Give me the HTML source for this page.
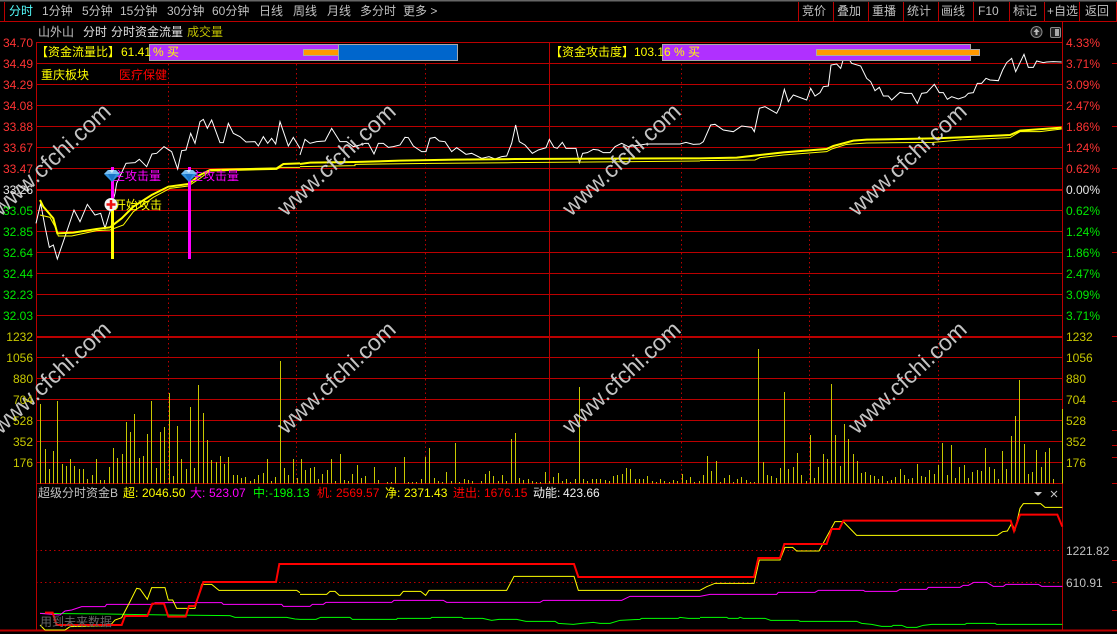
<!DOCTYPE html>
<html><head><meta charset="utf-8"><style>
html,body{margin:0;padding:0;background:#000;width:1117px;height:634px;overflow:hidden}
svg{position:absolute;left:0;top:0;display:block}
text{font-family:"Liberation Sans","WenQuanYi Zen Hei","Noto Sans CJK SC",sans-serif;font-size:12px}
.v{vector-effect:non-scaling-stroke;fill:none}
.g{stroke:#bb0000;stroke-width:1;fill:none;shape-rendering:crispEdges}
.t{stroke:#bb0000;stroke-width:2;fill:none;shape-rendering:crispEdges}
.d{stroke:#bb0000;stroke-width:1;stroke-dasharray:1.5 3;fill:none;shape-rendering:crispEdges}
text.wm{font-size:23px;fill:#d4d4d4;opacity:.92}
.r{fill:#ff3333}.n{fill:#00e800}.y{fill:#c8c800}.a{text-anchor:end}
</style></head><body>
<svg width="1117" height="634" viewBox="0 0 1117 634" xmlns="http://www.w3.org/2000/svg">
<rect width="1117" height="634" fill="#000"/>
<rect width="1117" height="1.5" fill="#666"/>
<!-- frame -->
<path class="g" d="M0 21.5H1117M4.5 2V21M798.5 2V21M833.5 2V21M868.5 2V21M903.5 2V21M938.5 2V21M973.5 2V21M1009.5 2V21M1044.5 2V21M1079.5 2V21M1116.5 2V21"/>
<path class="g" d="M36.5 42V630M1062.5 22V630"/>
<path class="g" d="M36 42.5H1062M36 63.5H1062M36 84.5H1062M36 105.5H1062M36 126.5H1062M36 147.5H1062M36 168.5H1062M36 210.5H1062M36 231.5H1062M36 252.5H1062M36 273.5H1062M36 294.5H1062M36 315.5H1062M36 357.5H1062M36 378.5H1062M36 399.5H1062M36 420.5H1062M36 441.5H1062M36 462.5H1062M36 483.5H1062"/>
<path class="t" d="M36 190H1062M36 337H1062M0 630.5H1117"/>
<path class="d" d="M168.5 64V483M296.5 64V483M425.5 64V483M681.5 64V483M809.5 64V483M938.5 64V483"/>
<path class="g" d="M549.5 42V483"/>
<path class="d" d="M36 550.5H1062M36 582.5H1062"/>
<path class="g" d="M1112 63.5H1117M1112 126.5H1117M1112 168.5H1117M1112 252.5H1117M1112 336.5H1117M1112 401.5H1117M1112 430.5H1117M1112 445.5H1117M1112 457.5H1117M1112 483.5H1117M1112 560.5H1117M1112 582.5H1117M1112 610.5H1117"/>

<!-- volume bars -->
<g transform="translate(0,320) scale(.33333)" stroke="#c8c800" stroke-width="1" shape-rendering="crispEdges">
<path class="v" d="M121 252V490M136 387V490M148 447V490M160 393V490M172 243V490M187 432V490M199 438V490M211 417V490M223 438V490M238 447V490M250 447V490M262 477V490M277 465V490M289 417V490M301 480V490M313 480V490M328 441V490M340 384V490M352 414V490M367 402V490M379 306V490M391 336V490M403 282V490M418 414V490M430 408V490M442 342V490M454 243V490M469 444V490M481 336V490M493 321V490M508 219V490M520 468V490M532 318V490M544 417V490M559 447V490M571 261V490M583 444V490M595 195V490M610 279V490M622 360V490M634 420V490M649 426V490M661 408V490M673 432V490M685 411V490M700 465V490M712 465V490M724 474V490M736 471V490M751 483V490M763 477V490M775 465V490M790 459V490M802 417V490M814 483V490M826 471V490M841 123V490M853 444V490M865 465V490M880 417V490M892 474V490M904 417V490M916 450V490M931 444V490M943 441V490M955 477V490M967 462V490M982 450V490M994 417V490M1006 483V490M1021 402V490M1033 480V490M1045 483V490M1057 462V490M1072 435V490M1084 474V490M1096 468V490M1123 441V490M1135 480V490M1162 486V490M1174 486V490M1186 441V490"/>
</g>
<g transform="translate(400,320) scale(.33333)" stroke="#c8c800" stroke-width="1" shape-rendering="crispEdges">
<path class="v" d="M13 411V490M25 486V490M37 486V490M49 486V490M64 477V490M76 411V490M88 384V490M103 474V490M115 483V490M127 486V490M139 456V490M154 483V490M166 369V490M178 486V490M193 477V490M205 480V490M217 483V490M244 483V490M256 462V490M268 453V490M280 468V490M295 483V490M307 465V490M319 483V490M334 357V490M346 339V490M358 474V490M370 480V490M385 477V490M397 483V490M409 486V490M421 486V490M436 456V490M448 483V490M460 471V490M475 459V490M487 483V490M499 477V490M511 486V490M526 477V490M538 201V490M550 477V490M562 483V490M577 477V490M589 477V490M601 477V490M616 480V490M628 483V490M640 468V490M652 465V490M667 462V490M679 444V490M691 447V490M706 477V490M718 477V490M730 477V490M742 468V490M757 483V490M769 486V490M781 477V490M793 483V490M808 486V490M820 480V490M832 483V490M847 462V490M859 480V490M871 471V490M883 486V490M898 483V490M910 465V490M922 408V490M934 453V490M949 423V490M961 486V490M973 474V490M988 465V490M1000 486V490M1012 477V490M1024 471V490M1039 480V490M1051 486V490M1063 486V490"/>
</g>
<g transform="translate(757,320) scale(.33333)" stroke="#c8c800" stroke-width="1" shape-rendering="crispEdges">
<path class="v" d="M4 87V490M19 426V490M31 465V490M43 468V490M58 474V490M70 444V490M82 216V490M94 447V490M109 441V490M121 399V490M133 465V490M148 483V490M160 345V490M172 474V490M184 441V490M199 402V490M211 417V490M223 192V490M235 345V490M250 438V490M262 312V490M274 357V490M289 402V490M301 423V490M313 459V490M325 456V490M340 465V490M352 468V490M364 477V490M376 468V490M391 483V490M403 480V490M415 471V490M430 447V490M442 465V490M454 477V490M466 474V490M481 432V490M493 468V490M505 471V490M517 450V490M532 462V490M544 435V490M556 369V490M571 465V490M583 375V490M595 474V490M607 441V490M622 435V490M634 474V490M646 456V490M661 450V490M673 453V490M685 384V490M697 441V490M712 447V490M724 477V490M736 393V490M748 447V490M763 348V490M775 288V490M787 180V490M802 372V490M814 462V490M826 456V490M838 390V490M853 441V490M865 396V490M877 384V490M889 477V490M916 267V490"/>
</g>

<!-- white price line -->
<g fill="none" stroke="#fff" stroke-width="1">
<polyline class="v" transform="translate(0,110) scale(.33333)" points="108,340 122,280 135,350 148,412 160,405 172,447 195,380 222,300 240,335 262,283 285,315 302,310 315,355 330,305 345,250 350,220 378,160 405,158 418,148 440,170 456,132 470,130 492,110 515,125 533,177 545,122 558,120 572,70 585,100 600,35 610,28 622,55 635,30 660,98 670,98 685,40 700,70 720,80 738,96 765,95 775,108 790,80 803,100 815,85 827,102 840,35 865,108 880,82 900,115"/>
<polyline class="v" transform="translate(300,100) scale(.33333)" points="0,165 15,118 30,130 50,125 75,123 95,85 120,125 140,125 160,140 180,135 195,130 205,130 222,162 235,130 250,130 265,142 280,140 300,135 315,112 325,113 340,138 365,155 378,155 390,115 405,112 418,123 435,125 455,155 470,143 498,163 515,160 545,175 567,170 585,177 605,170 620,168 635,130 647,75 658,125 675,135 697,160 715,150 738,143 748,118 762,142 772,145 787,127 798,145 828,145 838,188 848,160 862,158 880,148 895,150 910,158 930,158 945,140 965,130 985,140 1040,132 1140,132 1158,127 1180,133 1200,132"/>
<polyline class="v" transform="translate(700,50) scale(.33333)" points="0,282 10,275 32,225 45,223 70,240 100,245 125,228 155,232 163,245 178,175 195,170 230,190 240,170 253,118 265,155 280,135 320,150 332,115 345,138 360,128 370,110 385,108 393,45 410,42 422,55 435,10 455,40 482,48 500,85 512,95 525,122 538,112 550,138 565,138 575,150 600,127 615,130 635,130 652,160 665,130 680,128 703,103 718,128 730,128 742,148 755,140 775,147 795,140 805,130 820,128 832,100 845,100 858,85 870,90 895,92 908,60 920,38 935,25 947,65 972,13 985,52 1000,52 1010,33 1030,38 1040,36 1060,35 1085,36"/>
</g>
<!-- yellow avg lines -->
<g fill="none" stroke="#ffff00">
<polyline class="v" stroke-width="2" transform="translate(0,110) scale(.33333)" points="120,270 130,290 160,325 172,370 220,368 290,357 330,352 365,325 400,290 455,255 505,230 565,222 600,195 630,180 830,175 850,162 900,160"/>
<polyline class="v" stroke-width="1" transform="translate(0,110) scale(.33333)" points="120,315 150,322 165,350 175,378 215,378 290,362 330,360 370,345 400,305 460,262 510,235 565,228 600,205 630,183 830,178 840,172 900,172"/>
<polyline class="v" stroke-width="2" transform="translate(300,100) scale(.33333)" points="0,192 30,188 165,186 300,182 465,179 645,177 1120,175 1200,175"/>
<polyline class="v" stroke-width="1" transform="translate(300,100) scale(.33333)" points="0,200 165,197 165,193 395,190 640,188 1200,183"/>
<polyline class="v" stroke-width="2" transform="translate(700,50) scale(.33333)" points="0,325 110,323 180,315 250,307 380,297 400,288 460,272 500,269 700,265 780,262 930,255 960,242 1085,233"/>
<polyline class="v" stroke-width="1" transform="translate(700,50) scale(.33333)" points="0,332 165,330 180,323 250,315 380,305 395,297 440,283 500,279 700,277 780,270 930,263 960,245 1020,245 1085,237"/>
</g>

<!-- indicator lines -->
<g fill="none" stroke-width="1">
<g transform="translate(0,480) scale(.33333)">
<polyline class="v" stroke="#00ff00" points="120,400 320,402 505,405 690,407 705,412 860,412 885,417 900,418"/>
<polyline class="v" stroke="#ff00ff" points="120,400 180,405 195,393 215,390 245,380 315,380 320,373 460,373 465,368 665,368 670,373 845,373 850,379 900,379"/>
<polyline class="v" stroke="#ffff00" points="120,435 135,450 195,450 210,440 330,437 345,420 365,413 390,365 410,325 420,327 442,358 455,323 495,323 505,360 518,360 530,385 585,385 605,313 635,313 657,331 890,331 900,338"/>
<polyline class="v" stroke="#ff0000" stroke-width="2" points="135,398 158,398 170,435 365,435 375,408 442,408 457,371 492,371 505,410 557,410 567,378 585,378 610,306 828,306 838,252 900,252"/>
</g>
<g transform="translate(300,480) scale(.33333)">
<polyline class="v" stroke="#00ff00" points="0,418 48,418 62,412 150,412 157,418 290,418 292,415 392,415 395,412 485,412 490,415 548,415 575,421 597,418 650,418 678,424 765,424 775,430 820,433 845,430 880,427 900,430 930,430 960,421 1020,418 1025,415 1135,415 1140,412 1165,415 1200,415"/>
<polyline class="v" stroke="#ff00ff" points="0,379 30,379 37,373 70,373 78,367 275,367 282,361 430,361 440,367 720,367 730,361 965,361 990,349 1200,349"/>
<polyline class="v" stroke="#ffff00" points="0,343 80,343 90,334 105,334 118,346 300,346 310,334 362,334 377,346 387,331 620,331 642,289 822,289 835,331 1200,331"/>
<polyline class="v" stroke="#ff0000" stroke-width="2" points="0,252 822,252 835,291 1200,291"/>
</g>
<g transform="translate(700,480) scale(.33333)">
<polyline class="v" stroke="#00ff00" points="0,412 80,412 85,415 115,415 120,412 130,415 195,415 212,421 295,421 300,424 470,424 485,430 515,433 545,439 575,439 580,436 605,436 620,442 650,442 670,436 695,433 795,433 800,430 885,430 890,433 1087,433"/>
<polyline class="v" stroke="#ff00ff" points="0,349 30,343 230,343 235,337 345,337 355,331 490,331 495,334 590,334 600,328 680,328 685,322 780,322 790,316 805,316 822,307 860,307 880,319 910,319 918,313 1015,313 1025,319 1087,319"/>
<polyline class="v" stroke="#ffff00" points="0,331 20,320 45,310 162,310 178,240 240,240 255,202 278,202 290,213 357,213 405,125 430,125 470,166 892,166 908,155 922,153 935,130 945,150 960,85 970,71 1022,71 1035,82 1087,82"/>
<polyline class="v" stroke="#ff0000" stroke-width="2" points="0,291 162,291 175,234 240,234 253,192 380,192 395,147 418,147 430,122 932,122 942,153 960,104 1072,104 1087,140"/>
</g>
</g>

<!-- watermarks -->
<text class="wm" transform="translate(1,217) rotate(-43)">www.cfchi.com</text>
<text class="wm" transform="translate(286,217) rotate(-43)">www.cfchi.com</text>
<text class="wm" transform="translate(571,217) rotate(-43)">www.cfchi.com</text>
<text class="wm" transform="translate(857,217) rotate(-43)">www.cfchi.com</text>
<text class="wm" transform="translate(1,435) rotate(-43)">www.cfchi.com</text>
<text class="wm" transform="translate(286,435) rotate(-43)">www.cfchi.com</text>
<text class="wm" transform="translate(571,435) rotate(-43)">www.cfchi.com</text>
<text class="wm" transform="translate(857,435) rotate(-43)">www.cfchi.com</text>

<!-- markers -->
<rect x="111" y="167" width="3" height="40" fill="#ff00ff"/>
<rect x="111" y="208" width="3" height="51" fill="#ffff00"/>
<rect x="188" y="167" width="3" height="92" fill="#ff00ff"/>
<text x="113" y="180" fill="#ff00ff">主攻击量</text>
<text x="191" y="180" fill="#ff00ff">主攻击量</text>
<text x="114" y="209" fill="#ffff00">开始攻击</text>
<g>
<polygon points="104,174 108,170 116,170 120,174 112,182" fill="#2f8fdc"/>
<polygon points="104,174 108,170 116,170 120,174" fill="#7cc0f2"/>
<polygon points="108,174 116,174 112,181" fill="#1a74c8"/>
<polygon points="109,170 114,170 112,173" fill="#cfe9fb"/>
</g>
<g>
<polygon points="181,174 185,170 193,170 197,174 189,182" fill="#2f8fdc"/>
<polygon points="181,174 185,170 193,170 197,174" fill="#7cc0f2"/>
<polygon points="185,174 193,174 189,181" fill="#1a74c8"/>
<polygon points="186,170 191,170 189,173" fill="#cfe9fb"/>
</g>
<circle cx="111" cy="204.500" r="6.500" fill="#f4f4f4"/>
<path d="M106.500 204.500H115.500M111 200V209" stroke="#f01010" stroke-width="2.500"/>

<!-- top bars -->
<rect x="149.500" y="44.500" width="189" height="16" fill="#b030ff" stroke="#aaa"/>
<rect x="338.500" y="44.500" width="119" height="16" fill="#0066cc" stroke="#aaa"/>
<rect x="303.500" y="49.500" width="35" height="6" fill="#ff9900" stroke="#aaa"/>
<rect x="662.500" y="44.500" width="308" height="16" fill="#b030ff" stroke="#aaa"/>
<rect x="816.500" y="49.500" width="163" height="6" fill="#ff9900" stroke="#aaa"/>

<!-- toolbar text -->
<g fill="#c0c0c0">
<text x="9" y="15" fill="#55ffff">分时</text>
<text x="42" y="15">1分钟</text><text x="82" y="15">5分钟</text><text x="120" y="15">15分钟</text>
<text x="167" y="15">30分钟</text><text x="212" y="15">60分钟</text><text x="259" y="15">日线</text>
<text x="293" y="15">周线</text><text x="327" y="15">月线</text><text x="360" y="15">多分时</text>
<text x="403" y="15">更多 &gt;</text>
<text x="802" y="15">竞价</text><text x="837" y="15">叠加</text><text x="872" y="15">重播</text>
<text x="907" y="15">统计</text><text x="941" y="15">画线</text><text x="978" y="15">F10</text>
<text x="1013" y="15">标记</text><text x="1047" y="15">+自选</text><text x="1085" y="15">返回</text>
<text x="38" y="36">山外山</text>
<text x="83" y="36" fill="#e0e0e0">分时</text>
<text x="111" y="36" fill="#e0e0e0">分时资金流量</text>
<text x="187" y="36" fill="#c0c000">成交量</text>
</g>

<!-- bar labels -->
<g fill="#ffff00">
<text x="36" y="56">【资金流量比】</text><text x="121" y="56">61.41</text><text x="153" y="56">% 买</text>
<text x="550" y="56">【资金攻击度】</text><text x="634" y="56">103.16</text><text x="674" y="56">% 买</text>
<text x="41" y="79">重庆板块</text>
</g>
<text x="119" y="79" fill="#ff0000">医疗保健</text>

<!-- left axis -->
<text x="33" y="47" class="r a">34.70</text><text x="33" y="68" class="r a">34.49</text><text x="33" y="89" class="r a">34.29</text><text x="33" y="110" class="r a">34.08</text><text x="33" y="131" class="r a">33.88</text><text x="33" y="152" class="r a">33.67</text><text x="33" y="173" class="r a">33.47</text>
<text x="33" y="194" class="a" fill="#e8e8e8">33.26</text>
<text x="33" y="215" class="n a">33.05</text><text x="33" y="236" class="n a">32.85</text><text x="33" y="257" class="n a">32.64</text><text x="33" y="278" class="n a">32.44</text><text x="33" y="299" class="n a">32.23</text><text x="33" y="320" class="n a">32.03</text>
<text x="33" y="341" class="y a">1232</text><text x="33" y="362" class="y a">1056</text><text x="33" y="383" class="y a">880</text><text x="33" y="404" class="y a">704</text><text x="33" y="425" class="y a">528</text><text x="33" y="446" class="y a">352</text><text x="33" y="467" class="y a">176</text>
<!-- right axis -->
<text x="1066" y="47" class="r">4.33%</text><text x="1066" y="68" class="r">3.71%</text><text x="1066" y="89" class="r">3.09%</text><text x="1066" y="110" class="r">2.47%</text><text x="1066" y="131" class="r">1.86%</text><text x="1066" y="152" class="r">1.24%</text><text x="1066" y="173" class="r">0.62%</text>
<text x="1066" y="194" fill="#e8e8e8">0.00%</text>
<text x="1066" y="215" class="n">0.62%</text><text x="1066" y="236" class="n">1.24%</text><text x="1066" y="257" class="n">1.86%</text><text x="1066" y="278" class="n">2.47%</text><text x="1066" y="299" class="n">3.09%</text><text x="1066" y="320" class="n">3.71%</text>
<text x="1066" y="341" class="y">1232</text><text x="1066" y="362" class="y">1056</text><text x="1066" y="383" class="y">880</text><text x="1066" y="404" class="y">704</text><text x="1066" y="425" class="y">528</text><text x="1066" y="446" class="y">352</text><text x="1066" y="467" class="y">176</text>
<text x="1066" y="555" fill="#c0c0c0">1221.82</text>
<text x="1066" y="587" fill="#c0c0c0">610.91</text>

<!-- indicator title -->
<text x="38" y="497" fill="#c0c0c0">超级分时资金B</text>
<text x="123" y="497" fill="#ffff00">超:</text><text x="142" y="497" fill="#ffff00">2046.50</text>
<text x="190" y="497" fill="#ff00ff">大:</text><text x="209" y="497" fill="#ff00ff">523.07</text>
<text x="253" y="497" fill="#00ff00">中:</text><text x="269" y="497" fill="#00ff00">-198.13</text>
<text x="317" y="497" fill="#ff0000">机:</text><text x="336" y="497" fill="#ff0000">2569.57</text>
<text x="385" y="497" fill="#ffff00">净:</text><text x="404" y="497" fill="#ffff00">2371.43</text>
<text x="453" y="497" fill="#ff0000">进出:</text><text x="484" y="497" fill="#ff0000">1676.15</text>
<text x="533" y="497" fill="#f0f0f0">动能:</text><text x="563" y="497" fill="#f0f0f0">423.66</text>
<text x="40" y="626" fill="#666">用到未来数据</text>

<!-- small icons -->
<polygon points="1034,492 1042,492 1038,496" fill="#c8c8c8"/>
<path d="M1051 491L1057 497M1057 491L1051 497" stroke="#c8c8c8" stroke-width="1"/>
<circle cx="1036.500" cy="32" r="5.500" fill="#222" stroke="#888"/>
<path d="M1036.500 28.500L1033.500 32H1035.500V35H1037.500V32H1039.500Z" fill="#bbb"/>
<rect x="1050.500" y="27.500" width="10" height="10" rx="1.500" fill="#222" stroke="#888"/>
<rect x="1055" y="29" width="4" height="7" fill="#aaa"/>
</svg>
</body></html>
